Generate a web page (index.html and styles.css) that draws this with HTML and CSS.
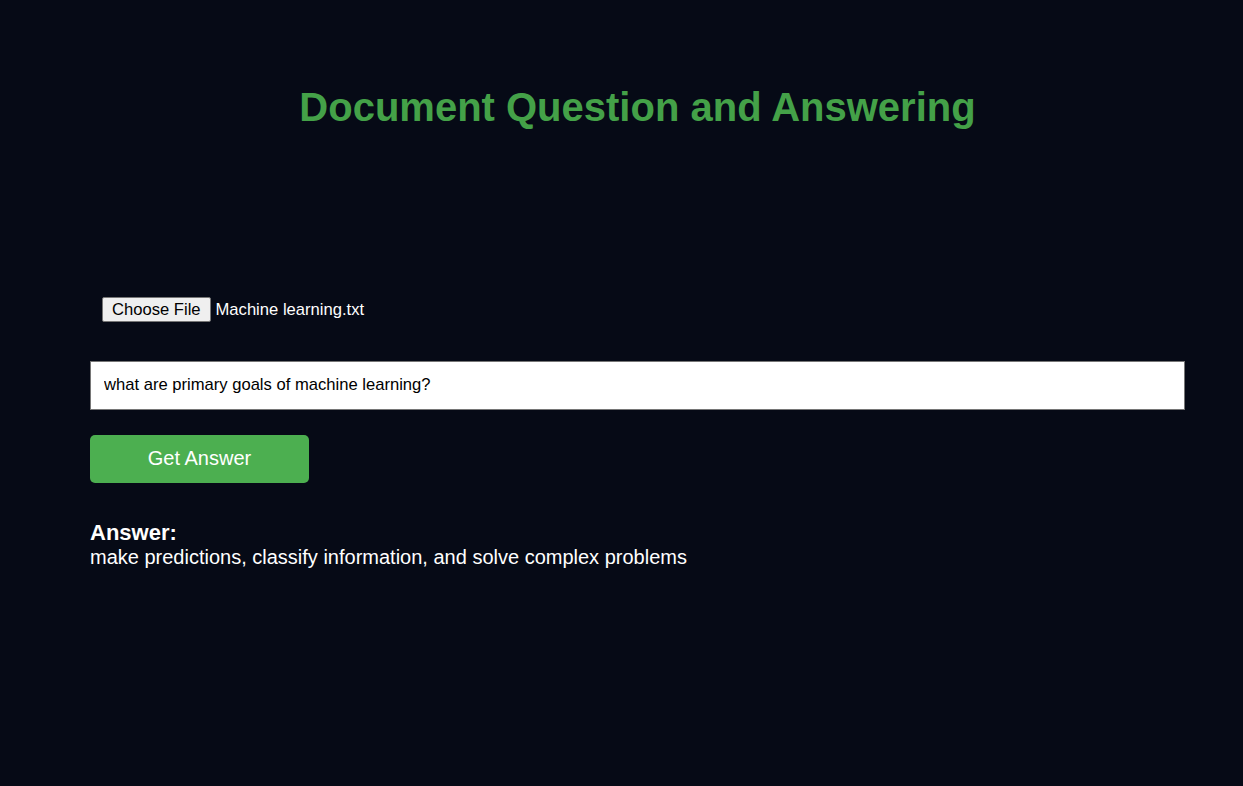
FILE: index.html
```html
<!DOCTYPE html>
<html lang="en">
<head>
<meta charset="utf-8">
<title>Document Question and Answering</title>
<link rel="stylesheet" href="styles.css">
</head>
<body>
<div class="page">
  <div class="container">
    <h1 class="title">Document Question and Answering</h1>
    <div class="upload">
      <button class="file-btn" type="button">Choose File</button>
      <span class="file-name">Machine learning.txt</span>
    </div>
    <input class="question" type="text" value="what are primary goals of machine learning?">
    <button class="ask" type="button">Get Answer</button>
    <div class="answer">
      <div class="answer-label">Answer:</div>
      <div class="answer-text">make predictions, classify information, and solve complex problems</div>
    </div>
  </div>
</div>
</body>
</html>
```
FILE: styles.css
```css
html, body {
  margin: 0;
  padding: 0;
  background: #060a16;
  font-family: "Liberation Sans", Arial, sans-serif;
  color: #ffffff;
}
.page {
  min-height: 786px;
  box-sizing: border-box;
  padding-left: 90px;
}
.container {
  width: 1095px;
  display: flex;
  flex-direction: column;
  align-items: flex-start;
}
.title {
  align-self: stretch;
  text-align: center;
  color: #44a148;
  font-size: 40px;
  font-weight: bold;
  line-height: 46px;
  margin: 84px 0 0 0;
}
.upload {
  margin: 167px 0 0 12px;
  display: flex;
  align-items: center;
  gap: 5px;
  font-size: 16.6px;
}
.file-btn {
  font-family: "Liberation Sans", Arial, sans-serif;
  font-size: 16.6px;
  color: #000;
  background: #efefef;
  border: 1px solid #767676;
  border-radius: 2px;
  height: 25px;
  padding: 0 9px;
  line-height: 21px;
}
.file-name {
  color: #fff;
  font-size: 16.6px;
}
.question {
  margin-top: 39px;
  align-self: stretch;
  height: 49px;
  box-sizing: border-box;
  border: 1px solid #767676;
  border-radius: 0;
  background: #fff;
  padding: 0 13px 1px;
  font-family: "Liberation Sans", Arial, sans-serif;
  font-size: 16.6px;
  color: #000;
  outline: none;
}
.ask {
  margin-top: 25px;
  width: 219px;
  height: 48px;
  padding: 0 0 2px;
  background: #4caf50;
  border: none;
  border-radius: 5px;
  color: #fff;
  font-family: "Liberation Sans", Arial, sans-serif;
  font-size: 20px;
  cursor: pointer;
}
.answer {
  margin-top: 37px;
  font-size: 20px;
  line-height: 25px;
}
.answer-label {
  font-weight: bold;
  font-size: 22px;
  line-height: 25px;
}
```
